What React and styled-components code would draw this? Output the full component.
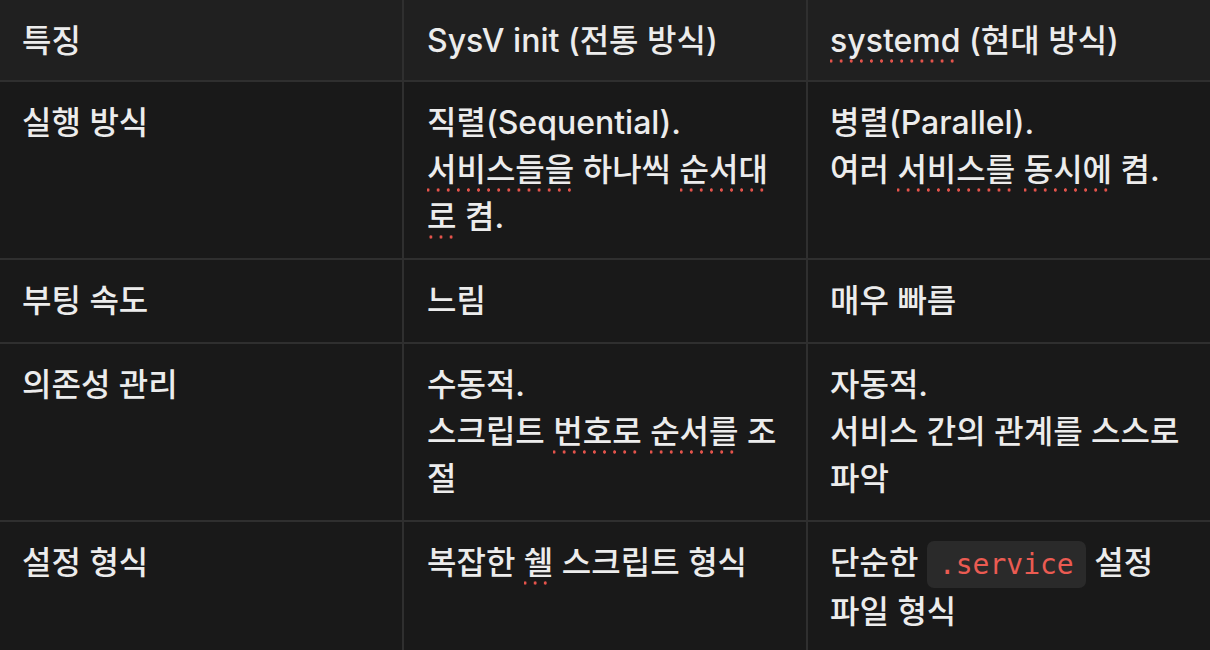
import React from "react";
import styled, { createGlobalStyle } from "styled-components";

const Global = createGlobalStyle`
  html, body { margin: 0; padding: 0; background: #191919; overflow: hidden; }
  body { font-family: Inter, "Noto Sans CJK KR", sans-serif; }
`;

const Table = styled.div`
  display: grid;
  grid-template-columns: 404px 404px 402px;
  width: 1210px;
  color: #ececec;
  font-size: 32px;
  font-weight: 500;
  line-height: 47px;
`;

const Cell = styled.div`
  box-sizing: border-box;
  padding: ${(p) => (p.$head ? "17px 22px 16px" : "17px 22px 18px")};
  background: ${(p) => (p.$head ? "#202020" : "#191919")};
  border-bottom: 2px solid #2f2f2f;
  border-right: ${(p) => (p.$last ? "none" : "2px solid #2f2f2f")};
  padding-left: ${(p) => (p.$mid ? "23px" : "22px")};
  overflow-wrap: anywhere;
`;

const Spell = styled.span`
  padding-bottom: 4px;
  background-image: radial-gradient(circle, #e5534b 1.4px, transparent 1.9px);
  background-size: 10.1px 6px;
  background-repeat: repeat-x;
  background-position: -4px 100%;
`;

const Code = styled.code`
  font-family: "DejaVu Sans Mono", "Liberation Mono", monospace;
  font-size: 28px;
  font-weight: 400;
  color: #eb5b52;
  background: #2a2a2a;
  border-radius: 7px;
  padding: 7px 12px;
`;

const rows = [
  {
    head: true,
    cells: [
      "특징",
      "SysV init (전통 방식)",
      <><Spell>systemd</Spell> (현대 방식)</>,
    ],
  },
  {
    cells: [
      "실행 방식",
      <>직렬(Sequential).<br /><Spell>서비스들을</Spell> 하나씩 <Spell>순서대로</Spell> 켬.</>,
      <>병렬(Parallel).<br />여러 <Spell>서비스를</Spell> <Spell>동시에</Spell> 켬.</>,
    ],
  },
  { cells: ["부팅 속도", "느림", "매우 빠름"] },
  {
    cells: [
      "의존성 관리",
      <>수동적.<br />스크립트 <Spell>번호로</Spell> <Spell>순서를</Spell> 조절</>,
      <>자동적.<br />서비스 간의 관계를 스스로 파악</>,
    ],
  },
  {
    cells: [
      "설정 형식",
      <>복잡한 <Spell>쉘</Spell> 스크립트 형식</>,
      <>단순한 <Code>.service</Code> 설정 파일 형식</>,
    ],
  },
];

export default function App() {
  return (
    <>
      <Global />
      <Table>
        {rows.map((r, i) =>
          r.cells.map((c, j) => (
            <Cell key={`${i}-${j}`} $head={r.head} $mid={j === 1} $last={j === 2}>
              {c}
            </Cell>
          ))
        )}
      </Table>
    </>
  );
}
